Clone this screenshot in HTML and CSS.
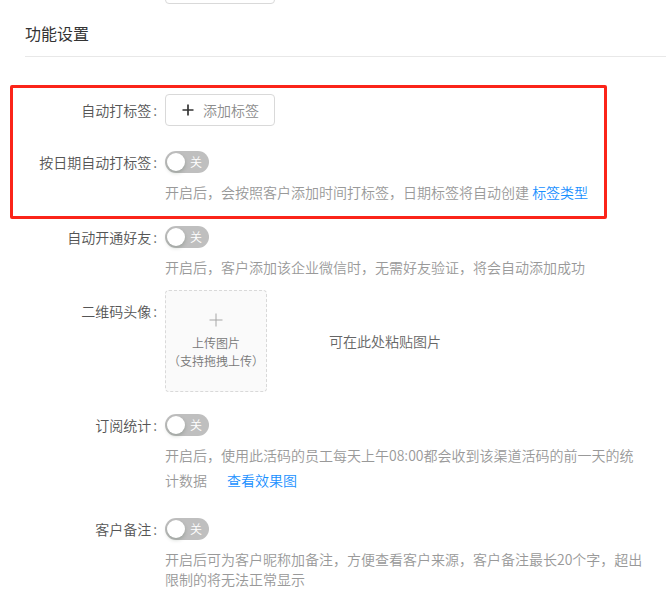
FILE: index.html
```html
<!DOCTYPE html>
<html lang="zh-CN">
<head>
<meta charset="utf-8">
<title>功能设置</title>
<link rel="stylesheet" href="styles.css">
</head>
<body>
<div class="page">
  <div class="item item-top">
    <div class="label label-empty"></div>
    <div class="control"><div class="row"><span class="btn btn-blank"></span></div></div>
  </div>

  <h2 class="section-title">功能设置</h2>

  <div class="form">
    <div class="item mb-20">
      <div class="label">自动打标签</div>
      <div class="control">
        <div class="row">
          <button class="btn" type="button">
            <svg class="btn-plus" width="14" height="14" viewBox="0 0 14 14" aria-hidden="true"><path d="M7 1.5v11M1.5 7h11" stroke="#333" stroke-width="1.7" fill="none"/></svg>
            <span class="btn-text">添加标签</span>
          </button>
        </div>
      </div>
    </div>

    <div class="item mb-19">
      <div class="label">按日期自动打标签</div>
      <div class="control">
        <div class="row"><span class="switch"><span class="knob"></span><span class="switch-text">关</span></span></div>
        <div class="help">开启后，会按照客户添加时间打标签，日期标签将自动创建 <a class="link">标签类型</a></div>
      </div>
    </div>

    <div class="item mb-13">
      <div class="label">自动开通好友</div>
      <div class="control">
        <div class="row"><span class="switch"><span class="knob"></span><span class="switch-text">关</span></span></div>
        <div class="help">开启后，客户添加该企业微信时，无需好友验证，将会自动添加成功</div>
      </div>
    </div>

    <div class="item mb-17">
      <div class="label label-upload">二维码头像</div>
      <div class="control upload-wrap">
        <div class="upload">
          <svg class="upload-plus" width="14" height="14" viewBox="0 0 14 14" aria-hidden="true"><path d="M7 0.5v13M0.5 7h13" stroke="#a6a6a6" stroke-width="1" fill="none"/></svg>
          <div class="upload-text">上传图片</div>
          <div class="upload-text">（支持拖拽上传）</div>
        </div>
        <div class="paste-tip">可在此处粘贴图片</div>
      </div>
    </div>

    <div class="item mb-18">
      <div class="label">订阅统计</div>
      <div class="control">
        <div class="row"><span class="switch"><span class="knob"></span><span class="switch-text">关</span></span></div>
        <div class="help">
          <div class="help-line">开启后，使用此活码的员工每天上午08:00都会收到该渠道活码的前一天的统</div>
          <div class="help-line">计数据<a class="link link-btn">查看效果图</a></div>
        </div>
      </div>
    </div>

    <div class="item">
      <div class="label">客户备注</div>
      <div class="control">
        <div class="row"><span class="switch"><span class="knob"></span><span class="switch-text">关</span></span></div>
        <div class="help">开启后可为客户昵称加备注，方便查看客户来源，客户备注最长20个字，超出限制的将无法正常显示</div>
      </div>
    </div>
  </div>
</div>
<div class="highlight"></div>
</body>
</html>
```
FILE: styles.css
```css
html, body {
  margin: 0;
  padding: 0;
  background: #fff;
}
body {
  position: relative;
  font-family: "Noto Sans CJK SC", "Noto Sans", sans-serif;
  font-size: 14px;
  font-weight: 350;
  color: #595959;
  overflow: hidden;
}
.page {
  display: flow-root;
}
.item {
  display: flex;
  align-items: flex-start;
}
.item-top {
  margin-top: -28px;
}
.mb-20 { margin-bottom: 20px; }
.mb-19 { margin-bottom: 19px; }
.mb-13 { margin-bottom: 13px; }
.mb-17 { margin-bottom: 17px; }
.mb-18 { margin-bottom: 18px; }

.label {
  flex: none;
  width: 165px;
  text-align: right;
  line-height: 32px;
  height: 32px;
  color: #555;
  white-space: nowrap;
}
.label::after {
  content: ":";
  margin: 0 8px 0 2px;
}
.label-empty::after {
  content: "";
}
.label-upload {
  margin-top: 5px;
}
.control {
  flex: none;
  width: 480px;
}
.row {
  height: 32px;
  display: flex;
  align-items: center;
}
.section-title {
  margin: 17px 0 0 25px;
  padding-bottom: 11px;
  border-bottom: 1px solid #e8e8e8;
  font-size: 16px;
  line-height: 24px;
  font-weight: 400;
  color: #333;
}
.form {
  padding-top: 37px;
}
.btn {
  box-sizing: border-box;
  display: inline-flex;
  align-items: center;
  height: 32px;
  width: 110px;
  padding: 0 15px;
  border: 1px solid #d9d9d9;
  border-radius: 4px;
  background: #fff;
  font-family: inherit;
  font-size: 14px;
  font-weight: 350;
  line-height: 30px;
  margin: 0;
}
.btn-blank {
  display: block;
}
.btn-plus {
  flex: none;
  margin-right: 8px;
}
.btn-text {
  color: #8c8c8c;
}
.switch {
  box-sizing: border-box;
  display: flex;
  align-items: center;
  width: 44px;
  height: 22px;
  padding: 2px;
  border-radius: 11px;
  background: #bfbfbf;
}
.knob {
  flex: none;
  width: 18px;
  height: 18px;
  border-radius: 50%;
  background: #fff;
  box-shadow: 0 2px 4px rgba(0, 35, 11, 0.2);
}
.switch-text {
  margin-left: 5px;
  font-size: 12px;
  line-height: 18px;
  color: #fff;
}
.help {
  margin-top: 4px;
  line-height: 20px;
  color: #999;
}
.help-line {
  white-space: nowrap;
}
.link {
  color: #1890ff;
  text-decoration: none;
  cursor: pointer;
}
.link-btn {
  line-height: 30px;
  margin-left: 20px;
}
.upload-wrap {
  display: flex;
  align-items: center;
  gap: 62px;
}
.upload {
  box-sizing: border-box;
  flex: none;
  width: 102px;
  height: 102px;
  border: 1px dashed #d9d9d9;
  border-radius: 4px;
  background: #fafafa;
  display: flex;
  flex-direction: column;
  align-items: center;
  justify-content: center;
}
.upload-plus {
  margin-bottom: 7px;
}
.upload-text {
  font-size: 12px;
  line-height: 18px;
  color: #777;
  white-space: nowrap;
}
.paste-tip {
  color: #666;
  line-height: 22px;
}
.highlight {
  position: absolute;
  left: 10px;
  top: 85px;
  width: 597px;
  height: 134px;
  box-sizing: border-box;
  border: 3px solid #fb2419;
  border-radius: 2px;
  pointer-events: none;
}
```
